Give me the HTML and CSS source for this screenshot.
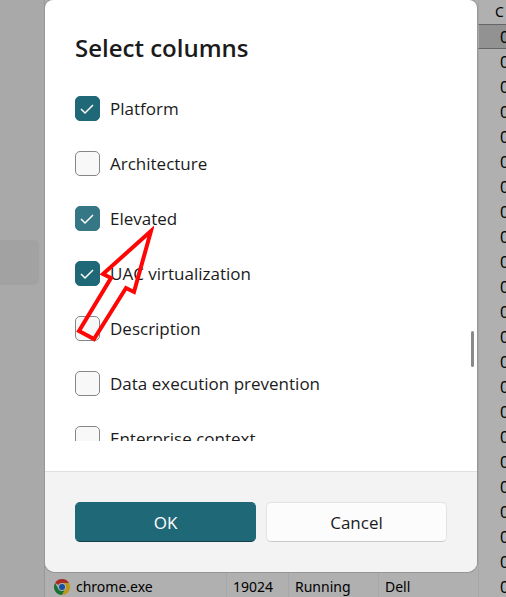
FILE: index.html
```
<!DOCTYPE html>
<html lang="en">
<head>
    <meta charset="UTF-8">
    <meta name="viewport" content="width=device-width, initial-scale=1.0">
    <title>Select columns</title>
    <link rel="stylesheet" href="styles.css">
</head>
<body>
    <div class="window">
        <nav class="sidebar">
            <div class="nav-item"></div>
        </nav>
        <table class="processes">
            <colgroup>
                <col class="col-name">
                <col class="col-pid">
                <col class="col-status">
                <col class="col-user">
                <col>
            </colgroup>
            <thead>
                <tr><th></th><th></th><th></th><th></th><th>C</th></tr>
            </thead>
            <tbody id="processRows">
                <tr id="chromeRow">
                    <td>
                        <span class="process">
                            <svg class="chrome" viewBox="0 0 48 48" aria-hidden="true">
                                <path fill="#a82e25" d="M24 24 3.200 12A24 24 0 0 1 44.800 12z"/>
                                <path fill="#187238" d="M24 48A24 24 0 0 1 3.200 12L13.600 30 34.400 30z"/>
                                <path fill="#bd9718" d="M34.400 30 24 48A24 24 0 0 0 44.800 12H24z"/>
                                <circle cx="24" cy="24" r="12" fill="#b0b0b0"/>
                                <circle cx="24" cy="24" r="9" fill="#174fa0"/>
                            </svg>
                            chrome.exe
                        </span>
                    </td>
                    <td>19024</td>
                    <td>Running</td>
                    <td>Dell</td>
                    <td class="cpu">0</td>
                </tr>
            </tbody>
        </table>
    </div>

    <div class="overlay">
        <form class="dialog" role="dialog" aria-labelledby="dialogTitle">
            <h2 id="dialogTitle">Select columns</h2>
            <div class="options">
                <label class="option"><input type="checkbox" checked><svg class="tick" viewBox="0 0 25 25"><path d="M6 13l4 4 8-8"/></svg>Platform</label>
                <label class="option"><input type="checkbox">Architecture</label>
                <label class="option"><input type="checkbox" class="hovered" checked><svg class="tick" viewBox="0 0 25 25"><path d="M6 13l4 4 8-8"/></svg>Elevated</label>
                <label class="option"><input type="checkbox" checked><svg class="tick" viewBox="0 0 25 25"><path d="M6 13l4 4 8-8"/></svg>UAC virtualization</label>
                <label class="option"><input type="checkbox">Description</label>
                <label class="option"><input type="checkbox">Data execution prevention</label>
                <label class="option"><input type="checkbox">Enterprise context</label>
            </div>
            <div class="scroll-thumb"></div>
            <svg class="arrow" viewBox="0 0 80 116" aria-hidden="true">
                <path d="M77 5 29 48 37 52 5 105 20 113 52 62 60 66z"/>
            </svg>
            <div class="actions">
                <button type="button" class="primary">OK</button>
                <button type="button">Cancel</button>
            </div>
        </form>
    </div>

    <script>
        // rows above chrome.exe only show their CPU value beside the dialog
        let body = document.getElementById("processRows");
        let chromeRow = document.getElementById("chromeRow");
        for (let i = 0; i < 22; i++) {
            let row = document.createElement("tr");
            if (i === 0) row.className = "selected";
            row.innerHTML = `<td></td><td></td><td></td><td></td><td class="cpu">0</td>`;
            body.insertBefore(row, chromeRow);
        }
    </script>
</body>
</html>
```

FILE: styles.css
```
* {
    box-sizing: border-box;
}
body {
    margin: 0;
    height: 100vh;
    overflow: hidden;
    position: relative;
    font-family: 'Open Sans', 'Noto Sans', sans-serif;
    color: #1b1b1b;
    background: #a9a9a9;
}
.window {
    display: flex;
    height: 100%;
    overflow: hidden;
}
.sidebar {
    flex: 0 0 45px;
    padding: 240px 5px 0 0;
    border-right: 1px solid #999;
}
.nav-item {
    height: 45px;
    background: #a2a2a2;
    border-radius: 0 5px 5px 0;
}
.processes {
    flex: 1;
    width: 100%;
    height: max-content;
    table-layout: fixed;
    border-collapse: separate;
    border-spacing: 0;
    background: #b0b0b0;
    color: #000;
    font-family: 'Noto Sans', sans-serif;
    font-size: 14px;
    line-height: 20px;
}
.col-name {
    width: 182px;
}
.col-pid {
    width: 62px;
}
.col-status {
    width: 90px;
}
.col-user {
    width: 100px;
}
.processes th,
.processes td {
    height: 25px;
    padding: 0 0 0 6px;
    border-right: 1px solid #a3a8ae;
    font-weight: normal;
    text-align: left;
    white-space: nowrap;
    overflow: hidden;
}
.processes th {
    height: 24px;
}
.processes th:last-child {
    padding-left: 16px;
}
.processes td:last-child,
.processes th:last-child {
    border-right: 0;
}
.processes .cpu {
    padding-left: 21px;
    font-size: 16px;
}
.processes .selected td {
    background: #929292;
    border-top: 1px solid #666;
    border-bottom: 1px solid #666;
}
.process {
    display: flex;
    align-items: center;
    gap: 6px;
    padding-left: 3px;
}
.chrome {
    width: 16px;
    height: 16px;
}
.overlay {
    position: absolute;
    inset: 0;
    padding: 0 29px 25px 45px;
}
.dialog {
    position: relative;
    display: flex;
    flex-direction: column;
    height: 100%;
    margin: 0;
    background: #fff;
    border-radius: 8px 8px 10px 10px;
    box-shadow: 0 0 0 1px #969696;
    overflow: hidden;
}
h2 {
    margin: 0;
    padding: 32px 30px 17px;
    font-size: 24px;
    line-height: 32px;
    font-weight: 600;
}
.options {
    flex: 1;
    min-height: 0;
    margin: 0 30px 30px;
    overflow: hidden;
}
.option {
    position: relative;
    display: flex;
    align-items: center;
    gap: 10px;
    height: 55px;
    font-size: 17px;
}
.option input {
    appearance: none;
    width: 25px;
    height: 25px;
    margin: 0;
    border: 1px solid #868686;
    border-radius: 5px;
    background: #f8f8f8;
}
.option input:checked {
    background: #1f6877;
    border-color: #1f6877;
}
.option input.hovered {
    background: #357784;
    border-color: #357784;
}
.tick {
    position: absolute;
    left: 0;
    width: 25px;
    height: 25px;
    fill: none;
    stroke: #fff;
    stroke-width: 1.500;
}
.scroll-thumb {
    position: absolute;
    top: 331px;
    right: 3px;
    width: 3px;
    height: 36px;
    border-radius: 2px;
    background: #8a8a8a;
}
.arrow {
    position: absolute;
    top: 226px;
    left: 29px;
    width: 80px;
    height: 116px;
    fill: none;
    stroke: #fe0606;
    stroke-width: 4;
}
.actions {
    display: flex;
    gap: 10px;
    padding: 30px;
    background: #f3f3f3;
    border-top: 1px solid #e0e0e0;
}
button {
    flex: 1;
    height: 40px;
    padding: 0;
    border: 1px solid #e3e3e3;
    border-bottom-color: #c8c8c8;
    border-radius: 5px;
    background: #fcfcfc;
    color: #1b1b1b;
    font: inherit;
    font-size: 17px;
}
.primary {
    background: #1f6877;
    border-color: #1f6877;
    border-bottom-color: #123f48;
    color: #fff;
}
```
